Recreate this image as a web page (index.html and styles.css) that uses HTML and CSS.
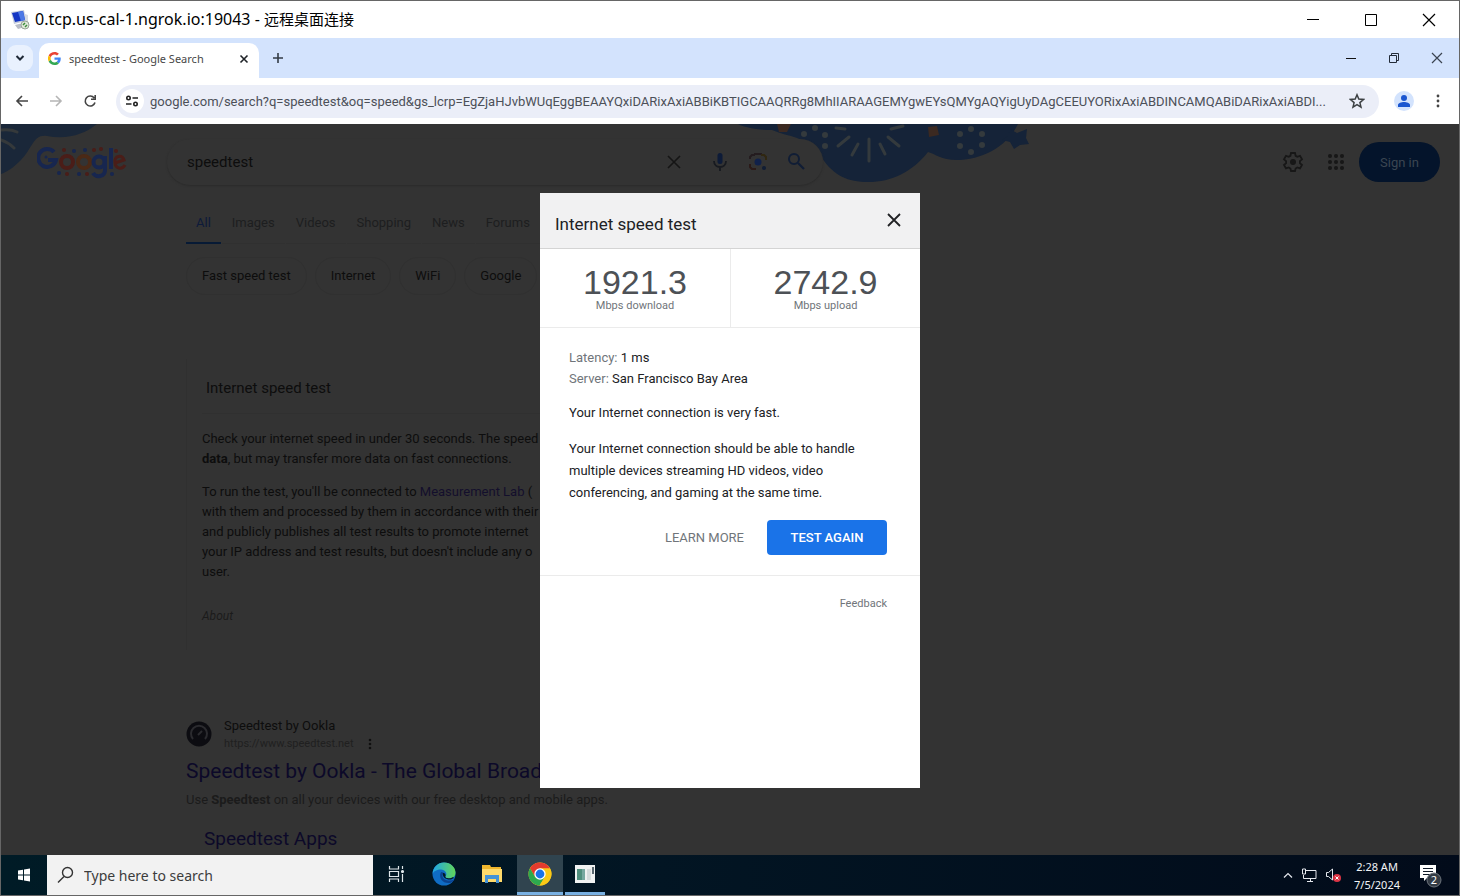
FILE: index.html
```html
<!DOCTYPE html>
<html lang="en">
<head>
<meta charset="utf-8">
<title>speedtest - Google Search</title>
<link rel="stylesheet" href="styles.css">
</head>
<body>
<div class="window">
  <header class="titlebar">
    <svg class="rdp-icon" viewBox="0 0 20 20" width="20" height="20" aria-hidden="true">
      <path d="M5 15l8-2 2 4-7 2z" fill="#b9bdc6"/>
      <path d="M1 2l13-2 2 11-12 3z" fill="#c3cbdc"/>
      <path d="M2 3l11-2 2 9-10 2z" fill="#1436c4"/>
      <path d="M8 2l5-1 2 9-4 1z" fill="#4b78e6"/>
      <path d="M15 4l3 1v9l-3-1z" fill="#d6dae2"/>
      <circle cx="15" cy="15" r="4" fill="#dfe9d8" stroke="#9aa59a"/>
      <path d="M13 15l2-2M15 17l2-2" stroke="#3d8b3d" stroke-width="1.5"/>
    </svg>
    <h1 class="titlebar-text">0.tcp.us-cal-1.ngrok.io:19043 - <span>远程桌面连接</span></h1>
    <div class="win-controls">
      <button type="button" aria-label="Minimize"><svg width="14" height="14"><path d="M1 6.500h12" stroke="#000"/></svg></button>
      <button type="button" aria-label="Maximize"><svg width="14" height="14"><path d="M1.500 1.500h11v11h-11z" fill="none" stroke="#000"/></svg></button>
      <button type="button" aria-label="Close"><svg width="14" height="14"><path d="M1 1l12 12M13 1L1 13" stroke="#000" stroke-width="1.200"/></svg></button>
    </div>
  </header>

  <div class="tabstrip">
    <button class="tab-search" type="button" aria-label="Search tabs"><svg width="10" height="10"><path d="M1.500 3l3.500 3.500L8.500 3" fill="none" stroke="#1f2937" stroke-width="2"/></svg></button>
    <div class="tab">
      <svg viewBox="0 0 48 48" width="13" height="13" aria-hidden="true">
        <path fill="#EA4335" d="M24 9.500c3.500 0 6.700 1.200 9.200 3.600l6.900-6.900C35.900 2.400 30.500 0 24 0 14.600 0 6.500 5.400 2.600 13.200l8 6.200C12.400 13.700 17.700 9.500 24 9.500z"/>
        <path fill="#4285F4" d="M47 24.500c0-1.600-.2-3.100-.4-4.500H24v9h12.900c-.6 3-2.300 5.500-4.800 7.200l7.700 6C44.400 38 47 31.800 47 24.500z"/>
        <path fill="#FBBC05" d="M10.500 28.600a14 14 0 010-9.200l-8-6.200a24 24 0 000 21.600z"/>
        <path fill="#34A853" d="M24 48c6.500 0 11.900-2.100 15.900-5.800l-7.700-6c-2.200 1.500-4.900 2.300-8.200 2.300-6.300 0-11.600-4.200-13.500-9.900l-8 6.200C6.500 42.600 14.600 48 24 48z"/>
      </svg>
      <span class="tab-title">speedtest - Google Search</span>
      <button type="button" aria-label="Close tab"><svg width="10" height="10"><path d="M1.500 1.500l7 7M8.500 1.500l-7 7" stroke="#1f2328" stroke-width="1.600"/></svg></button>
    </div>
    <button class="new-tab" type="button" aria-label="New tab"><svg width="12" height="12"><path d="M6 1v10M1 6h10" stroke="#333b45" stroke-width="1.600"/></svg></button>
    <div class="chrome-controls">
      <button type="button" aria-label="Minimize browser"><svg width="12" height="12"><path d="M1 6.500h10" stroke="#111"/></svg></button>
      <button type="button" aria-label="Restore browser"><svg width="12" height="12"><path d="M1.500 3.500h7v7h-7zM3.500 3.500v-2h7v7h-2" fill="none" stroke="#222b38"/></svg></button>
      <button type="button" aria-label="Close browser"><svg width="12" height="12"><path d="M1 1l10 10M11 1L1 11" stroke="#3a4350" stroke-width="1.200"/></svg></button>
    </div>
  </div>

  <div class="toolbar">
    <button class="nav" type="button" aria-label="Back"><svg width="14" height="14"><path d="M13 7H2M7 2L2 7l5 5" fill="none" stroke="#444" stroke-width="1.600"/></svg></button>
    <button class="nav" type="button" aria-label="Forward"><svg width="14" height="14"><path d="M1 7h11M7 2l5 5-5 5" fill="none" stroke="#b5b5b5" stroke-width="1.600"/></svg></button>
    <button class="nav" type="button" aria-label="Reload"><svg width="14" height="14"><path d="M11.200 4A5 5 0 1 0 12 8.500M12.200 1v4.200H8" fill="none" stroke="#444" stroke-width="1.600"/></svg></button>
    <div class="omnibox">
      <button class="site-info" type="button" aria-label="Site information"><svg width="14" height="14"><g fill="none" stroke="#222" stroke-width="1.600"><circle cx="3.500" cy="4" r="1.700"/><path d="M7.500 4H13M1 10h5.500"/><circle cx="10.500" cy="10" r="1.700"/></g></svg></button>
      <input class="url" type="text" aria-label="Address" value="google.com/search?q=speedtest&amp;oq=speed&amp;gs_lcrp=EgZjaHJvbWUqEggBEAAYQxiDARixAxiABBiKBTIGCAAQRRg8MhIIARAAGEMYgwEYsQMYgAQYigUyDAgCEEUYORixAxiABDINCAMQABiDARixAxiABDI...">
      <button class="star" type="button" aria-label="Bookmark"><svg width="16" height="16"><path d="M8 1.800l1.800 4.300 4.700.4-3.600 3.100 1.100 4.600L8 11.700l-4 2.500 1.100-4.600L1.500 6.500l4.700-.4z" fill="none" stroke="#3c4043" stroke-width="1.500"/></svg></button>
    </div>
    <button class="avatar" type="button" aria-label="Profile"><svg width="14" height="14"><circle cx="7" cy="4" r="3" fill="#1a56d0"/><path d="M1 13v-2c0-2 3.500-3 6-3s6 1 6 3v2z" fill="#1a56d0"/></svg></button>
    <button class="nav" type="button" aria-label="Menu"><svg width="14" height="14" fill="#444"><circle cx="7" cy="2" r="1.400"/><circle cx="7" cy="7" r="1.400"/><circle cx="7" cy="12" r="1.400"/></svg></button>
  </div>

  <main class="page">
    <svg class="doodle-left" width="100" height="52" aria-hidden="true">
      <path d="M0 0h96C84 10 66 16 46 12 32 10 32 24 20 36 12 44 6 48 0 50z" fill="#1a2739"/>
      <path d="M0 6c8-1 12 0 16 2M0 16c6 2 10 5 13 8" fill="none" stroke="#35393b" stroke-width="3" stroke-linecap="round"/>
    </svg>
    <svg class="doodle-right" width="300" height="60" aria-hidden="true">
      <path d="M0 0h280c-10 20-30 34-58 36-18 1-24-6-32-8-16 20-36 30-60 30-20 0-34-6-46-24C66 10 52 14 34 6 20 6 8 4 0 0z" fill="#152338"/>
      <path d="M272 5l7 4 10-4-1 9 3 6-9 1-6 4-4-7-8-2 6-4z" fill="#152338"/>
      <g stroke="#343a3d" stroke-width="3" stroke-linecap="round"><path d="M131 15v22M120 20l-6 11M111 13L100 22M107 5l-9-1M142 20l5 10M150 13l11 9M153 5l12-3"/></g>
      <g fill="#343a3d"><circle cx="77" cy="4" r="3"/><circle cx="87" cy="11" r="3"/><circle cx="66" cy="10" r="3"/><circle cx="87" cy="22" r="3"/><circle cx="233" cy="5" r="3"/><circle cx="244" cy="10" r="3"/><circle cx="244" cy="21" r="3"/><circle cx="233" cy="28" r="3"/><circle cx="222" cy="22" r="3"/><circle cx="222" cy="10" r="3"/></g>
      <path d="M39 0h14l-4 8h-8zM190 3l9-1 2 9-10 2z" fill="#3b2921"/>
    </svg>

    <div class="masthead">
      <a class="logo" href="#" aria-label="Google">
        <svg width="90" height="36" aria-hidden="true">
          <g fill="none" stroke-width="4">
            <path d="M17 8A9 9 0 1 0 19 16H11" stroke="#17264f"/>
            <circle cx="30" cy="18" r="6" stroke="#4a1d18"/><circle cx="47" cy="18" r="6" stroke="#4a2916"/>
            <circle cx="62" cy="18" r="5.500" stroke="#17264f"/><path d="M68 12v14c0 7-9 8-12 3M74 4v21" stroke="#17264f"/>
            <path d="M78 19l9-3c-2-6-10-4-9 2 0 7 7 8 10 3" stroke="#4a1d18" stroke-width="3"/>
          </g>
          <g fill="#17264f"><circle cx="37" cy="7" r="2"/><circle cx="48" cy="6" r="2"/><circle cx="22" cy="29" r="2"/><circle cx="42" cy="30" r="2"/><circle cx="75" cy="30" r="2"/><circle cx="9" cy="13" r="1.500"/></g>
          <g fill="#4a1d18"><circle cx="27" cy="6" r="2"/><circle cx="57" cy="6" r="2"/><circle cx="64" cy="5" r="2"/><circle cx="79" cy="7" r="2"/><circle cx="30" cy="30" r="2"/><circle cx="50" cy="30" r="2"/></g>
        </svg>
      </a>
      <div class="searchbox">
        <input type="text" aria-label="Search" value="speedtest">
        <button class="clear" type="button" aria-label="Clear"><svg width="16" height="16"><path d="M2 2l12 12M14 2L2 14" stroke="#151515" stroke-width="1.600"/></svg></button>
        <button type="button" aria-label="Voice search"><svg width="20" height="20"><rect x="7.500" y="1" width="5" height="11" rx="2.500" fill="#0d1b38"/><path d="M4 9c0 8 12 8 12 0M10 15v4" fill="none" stroke="#171a20" stroke-width="1.800"/></svg></button>
        <button type="button" aria-label="Search by image"><svg width="20" height="20"><g fill="none" stroke-width="2"><path d="M2 7V5l2-2h3M7 3V2h6v1" stroke="#241c1f"/><path d="M13 3h3l2 2v3" stroke="#302711"/><path d="M2 12v3l2 2h4" stroke="#2b1a18"/></g><circle cx="10" cy="10" r="3.500" fill="#10214a"/><circle cx="16" cy="16" r="2" fill="#101d35"/></svg></button>
        <button type="button" aria-label="Search Google"><svg width="20" height="20"><circle cx="8" cy="7" r="5" fill="none" stroke="#101d35" stroke-width="2"/><path d="M12 11l6 6" stroke="#101d35" stroke-width="2.200"/></svg></button>
      </div>
      <div class="account">
        <button type="button" aria-label="Settings"><svg width="22" height="22"><path d="M9 2h4l.6 2.800 1.700 1 2.700-.9 2 3.400-2.100 1.900v1.900l2.100 1.900-2 3.400-2.700-.9-1.700 1L13 20H9l-.6-2.500-1.700-1-2.700.9-2-3.400 2.100-1.900v-1.900L2 8.300l2-3.400 2.700.9 1.700-1z" fill="none" stroke="#171717" stroke-width="1.800"/><circle cx="11" cy="11" r="3" fill="#171717"/></svg></button>
        <button type="button" aria-label="Google apps"><svg width="18" height="18" fill="#171717"><circle cx="3" cy="3" r="2"/><circle cx="9" cy="3" r="2"/><circle cx="15" cy="3" r="2"/><circle cx="3" cy="9" r="2"/><circle cx="9" cy="9" r="2"/><circle cx="15" cy="9" r="2"/><circle cx="3" cy="15" r="2"/><circle cx="9" cy="15" r="2"/><circle cx="15" cy="15" r="2"/></svg></button>
        <a class="signin" href="#">Sign in</a>
      </div>
    </div>

    <div class="results">
      <nav class="kinds">
        <a class="on" href="#">All</a><a href="#">Images</a><a href="#">Videos</a><a href="#">Shopping</a><a href="#">News</a><a href="#">Forums</a>
      </nav>
      <div class="chips">
        <a href="#">Fast speed test</a><a href="#">Internet</a><a href="#">WiFi</a><a href="#">Google</a>
      </div>
      <section class="card">
        <h2>Internet speed test</h2>
        <p>Check your internet speed in under 30 seconds. The speed<br><b>data</b>, but may transfer more data on fast connections.</p>
        <p>To run the test, you'll be connected to <a href="#">Measurement Lab</a> (<br>with them and processed by them in accordance with their<br>and publicly publishes all test results to promote internet<br>your IP address and test results, but doesn't include any o<br>user.</p>
        <p class="about">About</p>
      </section>
      <article class="hit">
        <div class="source">
          <svg width="26" height="26" aria-hidden="true"><circle cx="13" cy="13" r="12.500" fill="#0c0c11"/><path d="M7 18a8 8 0 1 1 12 0" fill="none" stroke="#2b2b2f" stroke-width="2"/><path d="M12 14l4-4" stroke="#2b2b2f" stroke-width="2"/></svg>
          <div>
            <div class="site">Speedtest by Ookla</div>
            <div class="addr">https://www.speedtest.net <svg width="4" height="12" fill="#101010"><circle cx="2" cy="2" r="1.300"/><circle cx="2" cy="6" r="1.300"/><circle cx="2" cy="10" r="1.300"/></svg></div>
          </div>
        </div>
        <h3><a href="#">Speedtest by Ookla - The Global Broadband</a></h3>
        <p>Use <b>Speedtest</b> on all your devices with our free desktop and mobile apps.</p>
        <h4><a href="#">Speedtest Apps</a></h4>
      </article>
    </div>

    <div class="overlay">
      <section class="dialog" role="dialog" aria-labelledby="dlg-title">
        <header class="dialog-head">
          <h2 id="dlg-title">Internet speed test</h2>
          <button type="button" aria-label="Close dialog"><svg width="16" height="16"><path d="M2 2l12 12M14 2L2 14" stroke="#202124" stroke-width="1.800"/></svg></button>
        </header>
        <div class="metrics">
          <div><strong>1921.3</strong><span>Mbps download</span></div>
          <div><strong>2742.9</strong><span>Mbps upload</span></div>
        </div>
        <div class="dialog-body">
          <p class="facts"><span>Latency:</span> 1 ms<br><span>Server:</span> San Francisco Bay Area</p>
          <p>Your Internet connection is very fast.</p>
          <p>Your Internet connection should be able to handle multiple devices streaming HD videos, video conferencing, and gaming at the same time.</p>
          <div class="actions">
            <button class="learn" type="button">LEARN MORE</button>
            <button class="again" type="button">TEST AGAIN</button>
          </div>
        </div>
        <footer class="dialog-foot"><a href="#">Feedback</a></footer>
      </section>
    </div>
  </main>

  <footer class="taskbar">
    <button class="start" type="button" aria-label="Start"><svg width="14" height="14" fill="#fff"><path d="M1 2.500l5-.8V6.500H1zM7 1.500L13 .6v5.900H7zM1 7.500h5v4.800l-5-.8zM7 7.500h6v5.900l-6-.9z"/></svg></button>
    <label class="tasksearch">
      <svg width="18" height="18"><circle cx="10.500" cy="6.500" r="5" fill="none" stroke="#333" stroke-width="1.400"/><path d="M7 10.500L1 16.500" stroke="#333" stroke-width="1.500"/></svg>
      <input type="text" placeholder="Type here to search" aria-label="Type here to search">
    </label>
    <div class="apps">
      <button type="button" aria-label="Task view"><svg width="18" height="18" fill="none" stroke="#dfe6ea" stroke-width="1.200"><path d="M2.500 1v3h9V1M2.500 6.500h9v5h-9zM2.500 17v-3h9v3M15.500 1v3M15.500 9v8"/><circle cx="15.500" cy="6.500" r="1" fill="#dfe6ea"/></svg></button>
      <button type="button" aria-label="Edge"><svg width="24" height="24" viewBox="0 0 24 24"><defs><linearGradient id="edge" x1="0" y1="0" x2="1" y2="0"><stop offset="0" stop-color="#1fa6e8"/><stop offset="1" stop-color="#62d658"/></linearGradient></defs><circle cx="12" cy="12" r="11.500" fill="#0f6cc4"/><path d="M.6 12C1 5 6 .5 12 .5c7 0 11.500 5 11.500 10 0 4-3 6-6.500 6-2.500 0-4-1-3.500-2 2.500-3-.5-7-4.500-7C5 7.500 1.500 9 .6 12z" fill="url(#edge)"/><path d="M9 10c-3 6 2 12 9 11 2-.6 3.500-2 4.500-3.500-6 2.500-12 .5-12-4 0-1.500 1-2.500 1-3z" fill="#0b4390"/><path d="M11 11c-1 4 3 7 8 6.500l3-1.500-1-1c-3 2.500-9 1-7.500-1 .5-2-1-3.500-2.500-3z" fill="#021a28"/></svg></button>
      <button type="button" aria-label="File Explorer"><svg width="22" height="20"><path d="M1 1h8l1 2h10v15H1z" fill="#f0b72e"/><path d="M1 5h20v13H1z" fill="#ffda6b"/><path d="M4 11h14v8h-3v-4H7v4H4z" fill="#4492d6"/></svg></button>
      <button class="active" type="button" aria-label="Chrome"><svg width="24" height="24" viewBox="0 0 24 24"><circle cx="12" cy="12" r="11.500" fill="#fbc916"/><path d="M2 6.200A11.500 11.500 0 0 1 22 6.500H12L7 14.800z" fill="#e33b2e"/><path d="M2 6.200A11.500 11.500 0 0 0 11.500 23.500L17 14.800 7 14.800z" fill="#2da94f"/><path d="M12 6.500h10A11.500 11.500 0 0 1 11.500 23.500L17 14.800z" fill="#fbc916"/><circle cx="12" cy="12" r="5.700" fill="#fff"/><circle cx="12" cy="12" r="4.400" fill="#1b74e8"/></svg></button>
      <button class="open" type="button" aria-label="Server Manager"><svg width="22" height="20"><path d="M1 1h20v18H1z" fill="#f0f2f2"/><path d="M3 5h8v11H3z" fill="#4f8e7d"/><path d="M8 5h3v11H8z" fill="#77a8a0"/><path d="M13 5h4v11h-4z" fill="#d6dcdd"/><path d="M19 3v7" stroke="#273943" stroke-width="1.500"/></svg></button>
    </div>
    <div class="tray">
      <svg width="10" height="8"><path d="M1 6.500l4-4 4 4" fill="none" stroke="#e5e8ee" stroke-width="1.200"/></svg>
      <svg width="16" height="14" fill="none" stroke="#e5e8ee"><path d="M4 2.500h11v8H2.500V7M9.500 10.500v3M6 13.500h6M1.500 1v5h3V1z"/></svg>
      <svg width="17" height="16"><path d="M1.500 5.500h2l4-3.500v11l-4-3.500h-2z" fill="none" stroke="#e5e8ee"/><circle cx="12" cy="11" r="4" fill="#dc3545"/><path d="M10.500 9.500l3 3M13.500 9.500l-3 3" stroke="#fff"/></svg>
      <div class="clock">2:28 AM<br>7/5/2024</div>
      <svg class="notes" width="26" height="26"><path d="M2 3h16v13h-9l-3 3v-3H2z" fill="#fff"/><path d="M5 6.500h10M5 9.500h10M5 12.500h7" stroke="#101a28"/><circle cx="16" cy="18" r="7" fill="#333b45" stroke="#6d747d"/><text x="16" y="22">2</text></svg>
    </div>
  </footer>
</div>
</body>
</html>
```
FILE: styles.css
```css
* { box-sizing: border-box; }
body { margin: 0; font-family: Roboto, "Liberation Sans", sans-serif; font-size: 13px; }
h1, h2, h3, h4, p { margin: 0; font-weight: 400; }
button { border: 0; padding: 0; background: none; font: inherit; color: inherit; display: inline-flex; align-items: center; justify-content: center; }
input { border: 0; padding: 0; background: none; font: inherit; color: inherit; outline: 0; min-width: 0; }
a { color: inherit; text-decoration: none; }
svg { flex: none; }

.window { height: 100vh; display: flex; flex-direction: column; border: 1px solid #666; overflow: hidden; }

.titlebar { flex: none; height: 37px; display: flex; align-items: center; padding: 0 1px 0 9px; gap: 5px; background: #fff; }
.titlebar-text { flex: 1; font: 16px/24px "Noto Sans", "Noto Sans CJK SC", sans-serif; color: #000; padding-bottom: 2px; }
.titlebar-text span { font-size: 15px; }
.win-controls { display: flex; }
.win-controls button { width: 58px; height: 36px; }

.tabstrip { flex: none; height: 40px; display: flex; align-items: center; background: #d3e3fd; padding-left: 6px; }
.tab-search { width: 26px; height: 26px; border-radius: 9px; background: #e9f1fe; }
.tab { align-self: flex-end; height: 35px; width: 220px; margin-left: 6px; padding: 0 10px 4px 9px; display: flex; align-items: center; gap: 8px; background: #fff; border-radius: 10px 10px 0 0; }
.tab-title { flex: 1; font: 11px "Noto Sans", sans-serif; color: #474747; white-space: nowrap; }
.new-tab { width: 28px; height: 28px; margin-left: 5px; }
.chrome-controls { margin-left: auto; display: flex; padding-right: 1px; }
.chrome-controls button { width: 43px; height: 34px; }

.toolbar { flex: none; height: 46px; display: flex; align-items: center; background: #fff; padding: 0 4px; }
.nav { width: 34px; height: 30px; }
.omnibox { flex: 1; height: 33px; margin: 0 15px 0 9px; padding: 0 12px 0 4px; display: flex; align-items: center; gap: 6px; border-radius: 17px; background: #ebeef8; }
.site-info { width: 24px; height: 24px; border-radius: 50%; background: #fff; }
.url { flex: 1; font-size: 13px; color: #4c5058; text-overflow: ellipsis; }
.star { width: 20px; height: 20px; }
.avatar { width: 20px; height: 20px; border-radius: 50%; background: #d3e3fd; margin-right: 7px; }

.page { flex: 1; min-height: 0; position: relative; overflow: hidden; background: #333; color: #0d0d0d; }
.doodle-left { position: absolute; left: 0; top: 0; }
.doodle-right { position: absolute; left: 737px; top: 0; }
.masthead { position: relative; display: flex; align-items: center; padding: 15px 19px 0 36px; height: 61px; }
.logo { width: 130px; display: flex; }
.searchbox { width: 656px; height: 46px; display: flex; align-items: center; gap: 18px; padding: 0 17px 0 20px; border-radius: 23px; background: #333; box-shadow: 0 1px 2px #2b2b2b; }
.searchbox input { flex: 1; font-size: 15px; }
.searchbox .clear { margin-right: 10px; }
.account { margin-left: auto; display: flex; align-items: center; gap: 23px; }
.signin { width: 81px; height: 40px; margin-left: -9px; border-radius: 20px; background: #04142b; color: #3b4652; display: flex; align-items: center; justify-content: center; }

.results { padding-left: 185px; width: 740px; }
.kinds { display: flex; gap: 1px; margin-top: 20px; height: 39px; color: #1d1e1f; }
.kinds a { padding: 9px 10px 0; line-height: 18px; border-bottom: 1px solid #303030; }
.kinds .on { color: #0d1a3a; border-bottom: 2px solid #071a35; }
.chips { display: flex; gap: 8px; margin-top: 13px; }
.chips a { padding: 0 15px; height: 38px; line-height: 36px; border: 1px solid #303030; border-radius: 19px; }
.card { margin-top: 64px; padding: 0 15px; border-left: 1px solid #303030; }
.card h2 { font-size: 15px; line-height: 20px; padding: 19px 4px 15px; margin-bottom: 15px; border-bottom: 1px solid #303030; }
.card p { line-height: 20px; margin-bottom: 13px; white-space: nowrap; }
.card a { color: #130f2c; }
.card .about { font-size: 12px; font-style: italic; color: #1b1b1b; padding: 11px 0 24px; margin: 0; }
.hit { margin-top: 66px; }
.source { display: flex; align-items: center; gap: 12px; }
.site { line-height: 20px; }
.addr { font-size: 11px; line-height: 16px; color: #202020; display: flex; align-items: center; gap: 14px; }
.hit h3 { font-size: 21px; line-height: 28px; margin-top: 5px; color: #0c0929; white-space: nowrap; }
.hit p { line-height: 22px; margin-top: 4px; color: #1b1b1b; white-space: nowrap; }
.hit h4 { font-size: 19px; line-height: 26px; margin: 15px 0 0 18px; color: #0c0929; }

.overlay { position: absolute; inset: 0; padding-top: 2px; display: flex; align-items: center; justify-content: center; }
.dialog { width: 380px; min-height: 595px; background: #fff; color: #202124; display: flex; flex-direction: column; }
.dialog-head { display: flex; align-items: center; justify-content: space-between; height: 56px; padding: 0 18px 2px 15px; background: #f1f1f2; border-bottom: 1px solid #d4d4d4; }
.dialog-head h2 { font-size: 17px; padding-top: 8px; }
.metrics { display: grid; grid-template-columns: 1fr 1fr; border-bottom: 1px solid #ebebeb; }
.metrics div { height: 78px; padding-top: 16px; display: flex; flex-direction: column; align-items: center; }
.metrics div + div { border-left: 1px solid #ebebeb; }
.metrics strong { font: 34px/34px "Liberation Sans", Arial, sans-serif; color: #4d5156; }
.metrics span { font-size: 11px; line-height: 14px; color: #70757a; }
.dialog-body { padding: 19px 33px 20px 29px; border-bottom: 1px solid #ebebeb; }
.dialog-body p { line-height: 22px; margin-bottom: 14px; }
.dialog-body .facts { line-height: 21px; margin-bottom: 13px; }
.facts span { color: #70757a; }
.actions { display: flex; justify-content: flex-end; gap: 23px; margin-top: 16px; }
.learn { color: #70757a; }
.again { width: 120px; height: 35px; border-radius: 4px; background: #1a73e8; color: #fff; font-weight: 500; }
.dialog-foot { padding: 20px 33px; text-align: right; font-size: 11px; line-height: 16px; color: #70757a; }

.taskbar { flex: none; height: 40px; display: flex; align-items: stretch; background: linear-gradient(90deg, #001b26, #021523 45%, #020b1a); color: #f2f4f7; font-family: "Noto Sans", sans-serif; }
.start { width: 46px; }
.tasksearch { width: 326px; display: flex; align-items: center; gap: 9px; padding: 0 10px; background: #f2f2f2; color: #333; }
.tasksearch input { flex: 1; font-size: 14px; }
.tasksearch input::placeholder { color: #3c3c3c; opacity: 1; }
.apps { display: flex; gap: 2px; }
.apps button { width: 46px; border-bottom: 3px solid transparent; }
.apps .active { background: #30444f; border-bottom-color: #78b0e2; }
.apps .open { width: 40px; border-bottom-color: #78b0e2; }
.tray { margin-left: auto; display: flex; align-items: center; gap: 8px; padding-right: 15px; }
.clock { font-size: 11px; line-height: 18px; text-align: center; margin: 2px 10px 0 4px; }
.notes text { font: 11px "Noto Sans", sans-serif; fill: #fff; text-anchor: middle; }
```
